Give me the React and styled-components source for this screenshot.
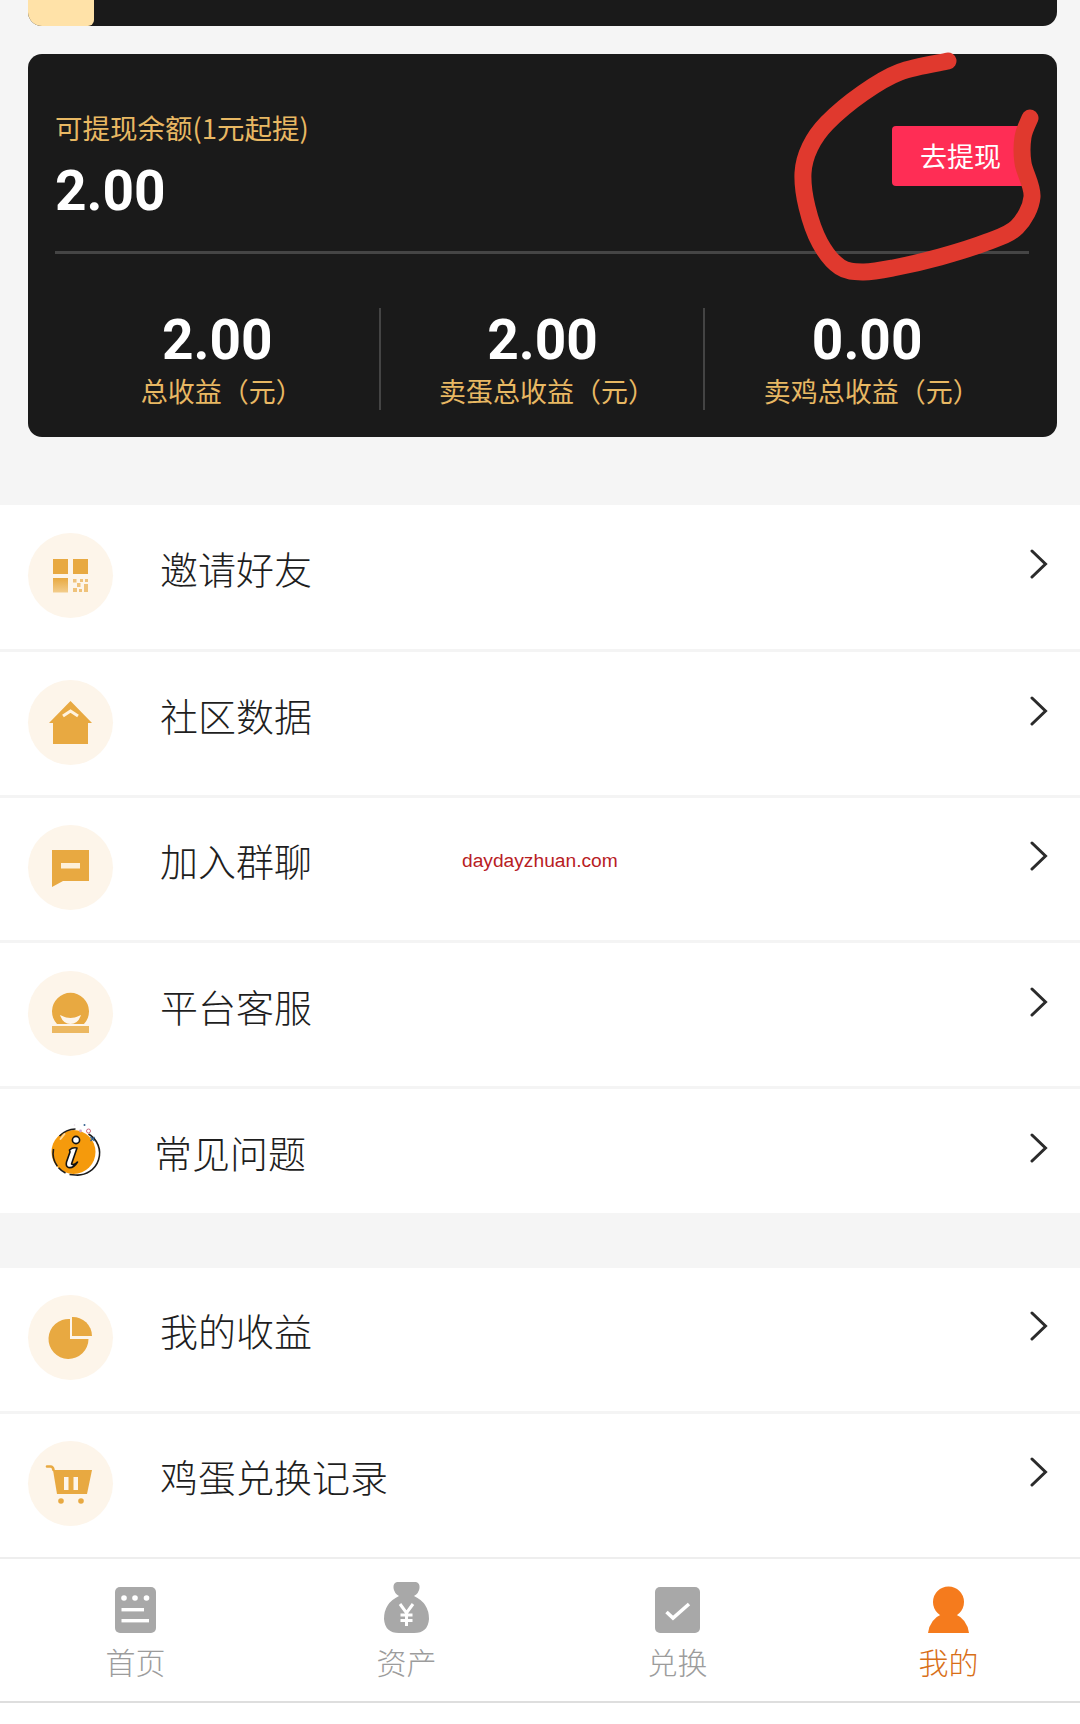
import React from "react";
import styled, { createGlobalStyle } from "styled-components";

const Global = createGlobalStyle`
  html, body { margin: 0; padding: 0; background: #f5f5f5; }
  * { box-sizing: border-box; }
  body { font-family: "Noto Sans CJK SC", "Noto Sans", sans-serif; }
`;

const Page = styled.div`
  position: relative;
  width: 1080px;
  height: 1724px;
  overflow: hidden;
  background: #f5f5f5;
`;

const TopStub = styled.div`
  height: 26px;
  margin: 0 23px 0 28px;
  background: #1a1a1a;
  border-radius: 0 0 14px 14px;
  overflow: hidden;
`;
const TopStubTab = styled.div`
  width: 66px;
  height: 100%;
  background: #ffe2a8;
  border-radius: 0 0 6px 6px;
`;

const Card = styled.section`
  height: 383px;
  margin: 28px 23px 0 28px;
  background: #1a1a1a;
  border-radius: 14px;
  padding: 0 28px 0 27px;
  display: flex;
  flex-direction: column;
`;
const Balance = styled.div`
  height: 200px;
  flex: none;
  border-bottom: 3px solid #454545;
  display: flex;
  justify-content: space-between;
  align-items: flex-start;
`;
const BalanceInfo = styled.div`
  padding-top: 53px;
  display: flex;
  flex-direction: column;
`;
const BalanceLabel = styled.div`
  font-size: 27.5px;
  line-height: 40px;
  color: #e8b863;
`;
const BigNumber = styled.div`
  font-family: Roboto, "Liberation Sans", sans-serif;
  font-weight: 700;
  font-size: 55px;
  line-height: 66px;
  color: #fff;
`;
const BalanceInfoNumber = styled(BigNumber)`
  margin-top: 11px;
`;
const Withdraw = styled.button`
  margin-top: 72px;
  width: 137px;
  height: 60px;
  border: 0;
  border-radius: 4px;
  background: #ff2d55;
  color: #fff;
  font-family: inherit;
  font-size: 27px;
  padding: 0 0 2px;
`;
const Stats = styled.div`
  margin-top: 54px;
  height: 101px;
  display: grid;
  grid-template-columns: repeat(3, 1fr);
`;
const Stat = styled.div`
  display: flex;
  flex-direction: column;
  align-items: center;
  padding-top: 2px;
  margin-left: ${(p) => (p.$first ? "0" : "-1px")};
  border-left: ${(p) => (p.$first ? "0" : "2px solid #444")};
`;
const StatNumber = styled(BigNumber)`
  line-height: 60px;
`;
const StatLabel = styled.div`
  margin-top: 2px;
  padding-left: 9px;
  font-size: 27px;
  line-height: 38px;
  color: #e8b863;
  white-space: nowrap;
`;

const List = styled.ul`
  list-style: none;
  margin: ${(p) => p.$top}px 0 0;
  padding: 0;
  background: #fff;
`;
const Row = styled.li`
  position: relative;
  height: ${(p) => p.$h}px;
  padding: 0 32px ${(p) => p.$pb || 0}px 28px;
  display: flex;
  align-items: center;
  border-bottom: ${(p) => (p.$last ? "0" : "3px solid #f4f4f4")};
`;
const IconCircle = styled.span`
  flex: none;
  width: 85px;
  height: 85px;
  border-radius: 50%;
  background: ${(p) => (p.$plain ? "transparent" : "#fdf5ea")};
  display: block;
  svg { display: block; }
`;
const RowText = styled.span`
  margin-left: ${(p) => p.$ml}px;
  padding-bottom: ${(p) => p.$pb}px;
  padding-top: ${(p) => p.$pt || 0}px;
  font-size: 38px;
  line-height: 50px;
  color: #1e1e1e;
  font-weight: 300;
`;
const Chevron = styled.svg`
  margin-left: auto;
  margin-bottom: ${(p) => p.$mb}px;
  flex: none;
`;
const Watermark = styled.span`
  position: absolute;
  left: 462px;
  top: 49px;
  font-family: "Liberation Sans", Arial, sans-serif;
  font-size: 19.2px;
  line-height: 28px;
  color: #b8201f;
`;

const TabBar = styled.nav`
  height: 146px;
  background: #fff;
  border-top: 2px solid #eee;
  border-bottom: 2px solid #dedede;
  display: grid;
  grid-template-columns: repeat(4, 271px);
`;
const Tab = styled.div`
  display: flex;
  flex-direction: column;
  align-items: center;
  padding-top: 22px;
`;
const TabIcon = styled.span`
  height: 52px;
  display: flex;
  align-items: flex-end;
  svg { display: block; }
`;
const TabLabel = styled.span`
  margin-top: 11px;
  font-size: 30px;
  line-height: 34px;
  font-weight: 300;
  color: ${(p) => (p.$active ? "#d86f18" : "#9c9c9c")};
`;
const Annotation = styled.svg`
  position: absolute;
  left: 0;
  top: 0;
  pointer-events: none;
`;
const PageFill = styled.div`
  height: 23px;
  background: #fff;
`;

const G = "#e8a941";

const QrIcon = () => (
  <svg width="85" height="85" viewBox="0 0 85 85">
    <defs>
      <linearGradient id="qrg" x1="0" y1="0" x2="0" y2="1">
        <stop offset="0" stopColor="#e8a941" />
        <stop offset="1" stopColor="#f3cd8c" />
      </linearGradient>
    </defs>
    <rect x="25" y="26" width="15" height="15" fill="#e8a941" />
    <rect x="45" y="26" width="15" height="15" fill="#e8a941" />
    <rect x="25" y="45" width="15" height="14.5" fill="url(#qrg)" />
    <g fill="#efc27a">
      <rect x="45" y="46" width="3.5" height="3.5" />
      <rect x="49" y="50" width="3.5" height="4" />
      <rect x="45" y="55" width="4" height="4" />
      <rect x="52" y="46" width="3" height="3" />
      <rect x="57" y="46" width="3" height="3" />
      <rect x="56" y="51" width="4" height="8" />
      <rect x="51" y="56" width="3" height="3" />
    </g>
  </svg>
);
const HouseIcon = () => (
  <svg width="85" height="85" viewBox="0 0 85 85">
    <path d="M42.5 21 L64 43 L60 43 L60 64 L25 64 L25 43 L21 43 Z" fill={G} />
    <path d="M35 36 L42.5 31 L50 36" fill="none" stroke="#fff3df" strokeWidth="3" />
  </svg>
);
const ChatIcon = () => (
  <svg width="85" height="85" viewBox="0 0 85 85">
    <path d="M24 25 H61 V56 H35 L24 62 Z" fill={G} />
    <rect x="33" y="38" width="19" height="5.5" fill="#fdf0da" />
  </svg>
);
const ServiceIcon = () => (
  <svg width="85" height="85" viewBox="0 0 85 85">
    <path d="M29 53 A18.5 18.5 0 1 1 56 53 Z" fill={G} />
    <path d="M32 44 Q42.5 50 53 44 Q50 53 42.5 53 Q35 53 32 44 Z" fill="#fdf5ea" />
    <rect x="24" y="55" width="37" height="7" fill="#ecb861" />
  </svg>
);
const InfoIcon = () => (
  <svg width="85" height="85" viewBox="0 0 85 85">
    <g transform="translate(19.5 2)">
      <circle cx="26" cy="41" r="22" fill="#f59a0c" />
      <path d="M41 23 A22 22 0 0 1 28 64 L22 63.5" fill="none" stroke="#1c1c1c" strokeWidth="1.6" />
      <path d="M12 25 A23 23 0 0 1 28 18" fill="none" stroke="#1c1c1c" strokeWidth="1.6" />
      <path d="M6 38 A22 22 0 0 0 18 62" fill="none" stroke="#1c1c1c" strokeWidth="1.6" strokeDasharray="18 2 10" />
      <path d="M13 28 L17 23" stroke="#ffd999" strokeWidth="2" strokeLinecap="round" />
      <circle cx="28.5" cy="29" r="3.6" fill="#fff" stroke="#111" strokeWidth="1.6" />
      <path d="M22 39 Q25 36 29.5 37 L24 53 Q26 55 30 51 Q26 57.5 21 56.5 Q18 55.5 19 51 L22.5 41 Z" fill="#fff" stroke="#111" strokeWidth="1.6" strokeLinejoin="round" />
      <circle cx="41" cy="20" r="2" fill="none" stroke="#c85a75" strokeWidth="0.9" />
      <circle cx="33" cy="20" r="1.4" fill="#cda3c7" />
      <circle cx="37" cy="14" r="1" fill="#35628f" />
      <path d="M43 26 L47 30 M47 26 L43 30" stroke="#35628f" strokeWidth="1.3" />
      <circle cx="27" cy="14" r="0.8" fill="#e6dbe6" />
    </g>
  </svg>
);
const PieIcon = () => (
  <svg width="85" height="85" viewBox="0 0 85 85">
    <path d="M42 24 A20 20 0 1 0 60.5 44 L42 44 Z" fill={G} />
    <path d="M44 22 A19 19 0 0 1 64 41 L44 41 Z" fill={G} />
  </svg>
);
const CartIcon = () => (
  <svg width="85" height="85" viewBox="0 0 85 85">
    <path d="M19 25.5 H22.5 Q25 25.5 25.5 29" fill="none" stroke={G} strokeWidth="2.6" strokeLinecap="round" />
    <path d="M25 29 H64 L59 53 H29 Z" fill={G} />
    <rect x="36" y="36" width="4.5" height="13" fill="#fdf5ea" />
    <rect x="45.5" y="36" width="4.5" height="13" fill="#fdf5ea" />
    <circle cx="33" cy="60" r="2.8" fill={G} />
    <circle cx="53" cy="60" r="2.8" fill={G} />
  </svg>
);

const HomeTab = () => (
  <svg width="41" height="46" viewBox="0 0 41 46">
    <rect width="41" height="46" rx="5" fill="#a8a8a8" />
    <circle cx="9" cy="11" r="2.8" fill="#fff" />
    <circle cx="20" cy="11" r="2.8" fill="#fff" />
    <circle cx="31.5" cy="11" r="2.8" fill="#fff" />
    <rect x="6.5" y="21" width="22.5" height="3.4" fill="#fff" />
    <rect x="6.5" y="32" width="27.5" height="3.4" fill="#fff" />
  </svg>
);
const BagTab = () => (
  <svg width="45" height="51" viewBox="0 0 45 51">
    <path d="M13 0 H32 Q36 1 35.5 6 Q35 11 30 14 Q45 21 45 37 Q44 51 30 51 H15 Q1 51 0 37 Q0 21 15 14 Q10 11 9.5 6 Q9 1 13 0 Z" fill="#a8a8a8" />
    <path d="M16 22 L22.5 31 L29 22 M22.5 31 V44 M16.5 33 H28.5 M16.5 38.5 H28.5" fill="none" stroke="#fff" strokeWidth="3" />
  </svg>
);
const CheckTab = () => (
  <svg width="45" height="46" viewBox="0 0 45 46">
    <rect width="45" height="46" rx="5" fill="#a8a8a8" />
    <path d="M11.5 25 L18 31 L34 17" fill="none" stroke="#fff" strokeWidth="3.6" />
  </svg>
);
const MeTab = () => (
  <svg width="41" height="47" viewBox="0 0 41 47">
    <circle cx="20.5" cy="16" r="15.5" fill="#f57b1d" />
    <path d="M0 47 Q2 33 14 28 H27 Q39 33 41 47 Z" fill="#f57b1d" />
  </svg>
);

const points = [
  [948, 61], [900, 72], [863, 93], [827, 123], [810, 147], [803, 173], [807, 207],
  [820, 243], [840, 267], [863, 272], [893, 268], [940, 257], [987, 242], [1017, 227],
  [1032, 197], [1023, 163], [1023, 137], [1030, 118],
];
const smooth = (pts) => {
  let d = `M${pts[0][0]} ${pts[0][1]}`;
  for (let i = 0; i < pts.length - 1; i++) {
    const p0 = pts[Math.max(i - 1, 0)];
    const p1 = pts[i];
    const p2 = pts[i + 1];
    const p3 = pts[Math.min(i + 2, pts.length - 1)];
    const c1 = [p1[0] + (p2[0] - p0[0]) / 6, p1[1] + (p2[1] - p0[1]) / 6];
    const c2 = [p2[0] - (p3[0] - p1[0]) / 6, p2[1] - (p3[1] - p1[1]) / 6];
    d += ` C${c1[0]} ${c1[1]} ${c2[0]} ${c2[1]} ${p2[0]} ${p2[1]}`;
  }
  return d;
};

const Arrow = ({ mb }) => (
  <Chevron $mb={mb} width="18" height="30" viewBox="0 0 18 30">
    <path d="M2 2 L15.5 15 L2 28" fill="none" stroke="#2b2b2b" strokeWidth="3" strokeLinecap="round" strokeLinejoin="miter" />
  </Chevron>
);

const stats = [
  ["2.00", "总收益（元）"],
  ["2.00", "卖蛋总收益（元）"],
  ["0.00", "卖鸡总收益（元）"],
];

export default function App() {
  return (
    <Page>
      <Global />
      <TopStub><TopStubTab /></TopStub>
      <Card>
        <Balance>
          <BalanceInfo>
            <BalanceLabel>可提现余额(1元起提)</BalanceLabel>
            <BalanceInfoNumber>2.00</BalanceInfoNumber>
          </BalanceInfo>
          <Withdraw>去提现</Withdraw>
        </Balance>
        <Stats>
          {stats.map(([n, l], i) => (
            <Stat key={l} $first={i === 0}>
              <StatNumber>{n}</StatNumber>
              <StatLabel>{l}</StatLabel>
            </Stat>
          ))}
        </Stats>
      </Card>

      <List $top={68}>
        <Row $h={147} $pb={3}><IconCircle><QrIcon /></IconCircle><RowText $ml={47} $pb={15}>邀请好友</RowText><Arrow mb={23} /></Row>
        <Row $h={146} $pb={3}><IconCircle><HouseIcon /></IconCircle><RowText $ml={47} $pb={15}>社区数据</RowText><Arrow mb={23} /></Row>
        <Row $h={145} $pb={3}>
          <IconCircle><ChatIcon /></IconCircle><RowText $ml={47} $pb={15}>加入群聊</RowText><Arrow mb={23} />
          <Watermark>daydayzhuan.com</Watermark>
        </Row>
        <Row $h={146} $pb={3}><IconCircle><ServiceIcon /></IconCircle><RowText $ml={47} $pb={15}>平台客服</RowText><Arrow mb={23} /></Row>
        <Row $h={124} $last><IconCircle $plain><InfoIcon /></IconCircle><RowText $ml={41} $pb={0} $pt={1}>常见问题</RowText><Arrow mb={6} /></Row>
      </List>

      <List $top={55}>
        <Row $h={146} $pb={4}><IconCircle><PieIcon /></IconCircle><RowText $ml={47} $pb={15}>我的收益</RowText><Arrow mb={23} /></Row>
        <Row $h={143} $pb={4} $last><IconCircle><CartIcon /></IconCircle><RowText $ml={47} $pb={15}>鸡蛋兑换记录</RowText><Arrow mb={23} /></Row>
      </List>

      <TabBar>
        <Tab><TabIcon><HomeTab /></TabIcon><TabLabel>首页</TabLabel></Tab>
        <Tab><TabIcon><BagTab /></TabIcon><TabLabel>资产</TabLabel></Tab>
        <Tab><TabIcon><CheckTab /></TabIcon><TabLabel>兑换</TabLabel></Tab>
        <Tab><TabIcon><MeTab /></TabIcon><TabLabel $active>我的</TabLabel></Tab>
      </TabBar>
      <PageFill />

      <Annotation width="1080" height="300" viewBox="0 0 1080 300">
        <path d={smooth(points)} fill="none" stroke="#e0392e" strokeWidth="17" strokeLinecap="round" strokeLinejoin="round" />
      </Annotation>
    </Page>
  );
}
